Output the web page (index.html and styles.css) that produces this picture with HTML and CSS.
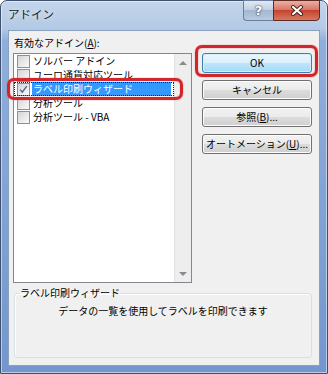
FILE: index.html
```html
<!DOCTYPE html>
<html lang="ja">
<head>
    <meta charset="UTF-8">
    <title>アドイン</title>
    <link rel="stylesheet" href="styles.css">
</head>
<body>
    <div class="window">
        <div class="titlebar">
            <span class="title">アドイン</span>
            <div class="caption">
                <span class="cap-help">?</span>
                <span class="cap-close">
                    <svg width="14" height="11" viewBox="0 0 14 11">
                        <path d="M3 2 L11 9 M11 2 L3 9" stroke="#40201c" stroke-width="4" stroke-linecap="round"/>
                        <path d="M3 2 L11 9 M11 2 L3 9" stroke="#fff" stroke-width="2.2" stroke-linecap="round"/>
                    </svg>
                </span>
            </div>
        </div>

        <div class="client">
            <div class="top">
                <div class="left">
                    <div class="list-label">有効なアドイン(<u>A</u>):</div>
                    <div class="listbox">
                        <ul class="items">
                            <li class="item"><span class="check"></span><span class="name">ソルバー アドイン</span></li>
                            <li class="item"><span class="check"></span><span class="name">ユーロ通貨対応ツール</span></li>
                            <li class="item selected">
                                <span class="check">
                                    <svg width="11" height="11" viewBox="0 0 11 11">
                                        <path d="M2.2 5.6 L4.3 8.2 L8.8 2.2" fill="none" stroke="#4c5f9c" stroke-width="1.4"/>
                                    </svg>
                                </span>
                                <span class="name">ラベル印刷ウィザード</span>
                            </li>
                            <li class="item"><span class="check"></span><span class="name">分析ツール</span></li>
                            <li class="item"><span class="check"></span><span class="name">分析ツール - VBA</span></li>
                        </ul>
                        <div class="scrollbar">
                            <span class="arrow up"></span>
                            <span class="arrow down"></span>
                        </div>
                    </div>
                </div>

                <div class="buttons">
                    <button class="btn default">OK</button>
                    <button class="btn">キャンセル</button>
                    <button class="btn">参照(<u>B</u>)...</button>
                    <button class="btn">オートメーション(<u>U</u>)...</button>
                </div>
            </div>

            <fieldset class="desc">
                <legend>ラベル印刷ウィザード</legend>
                <p>データの一覧を使用してラベルを印刷できます</p>
            </fieldset>

            <!-- red callouts drawn over the dialog -->
            <div class="mark mark-list"></div>
            <div class="mark mark-ok"></div>
        </div>
    </div>
</body>
</html>
```

FILE: styles.css
```css
body {
    margin: 0;
    background: #fff;
    font-family: "Noto Sans CJK JP", "Noto Sans", sans-serif;
    font-size: 10px;
    color: #000;
}

.window {
    width: 328px;
    height: 374px;
    box-sizing: border-box;
    border: 1px solid #3e506e;
    border-radius: 7px 7px 0 0;
    padding: 0 7px 7px;
    display: flex;
    flex-direction: column;
    background: linear-gradient(to bottom, #c3d5eb 0, #b3c9e5 28px, #8fafdb 40px, #7397cd 100%);
    box-shadow: inset 0 0 0 1px rgba(255, 255, 255, 0.5);
}

/* title bar */

.titlebar {
    height: 29px;
    display: flex;
    align-items: flex-start;
}

.title {
    margin-top: 5px;
    font-size: 11.5px;
    line-height: 16px;
    color: #1a1a1a;
    text-shadow: 0 0 5px rgba(255, 255, 255, 0.9);
}

.caption {
    margin-left: auto;
    margin-top: -1px;
    display: flex;
}

.cap-help,
.cap-close {
    height: 21px;
    box-sizing: border-box;
    display: flex;
    align-items: center;
    justify-content: center;
}

.cap-help {
    width: 30px;
    border: 1px solid #6a7f9e;
    border-right: 0;
    border-radius: 0 0 0 4px;
    background: linear-gradient(#e1e9f3, #c2d0e2 45%, #a5b7cf 50%, #b9cbe1);
    color: #fff;
    font-family: "DejaVu Sans", sans-serif;
    font-weight: bold;
    font-size: 13px;
    text-shadow: 0 0 2px #2a3a55, 0 0 1px #2a3a55;
}

.cap-close {
    width: 47px;
    border: 1px solid #5f2a26;
    border-radius: 0 0 4px 0;
    background: linear-gradient(#eab0a2, #d9786a 45%, #c6442f 50%, #d5785f);
}

/* client area */

.client {
    flex: 1;
    position: relative;
    box-sizing: border-box;
    border: 1px solid #8aa0bf;
    background: #f0f0f0;
    display: flex;
    flex-direction: column;
}

.top {
    display: flex;
    height: 252px;
}

.left {
    width: 183px;
    box-sizing: border-box;
    padding-left: 4px;
    display: flex;
    flex-direction: column;
}

.list-label {
    margin: 5px 0 0 1px;
    line-height: 14px;
}

.listbox {
    margin-top: 3px;
    width: 179px;
    height: 230px;
    box-sizing: border-box;
    border: 1px solid #828790;
    background: #fff;
    display: flex;
}

.items {
    list-style: none;
    margin: 0;
    padding: 0;
    flex: 1;
}

.item {
    display: flex;
    align-items: center;
    height: 14px;
    padding-left: 3px;
    line-height: 14px;
}

.check {
    width: 13px;
    height: 13px;
    flex: none;
    box-sizing: border-box;
    border: 1px solid #8e8f8f;
    background: linear-gradient(135deg, #d3d3d3, #fbfbfb);
    margin-right: 2px;
    display: flex;
    align-items: center;
    justify-content: center;
}

.name {
    flex: 1;
    margin-right: 3px;
    padding-left: 1px;
    white-space: nowrap;
}

.item.selected {
    outline: 1px dotted #222;
    outline-offset: -1px;
}

.item.selected .name {
    background: #3399ff;
    color: #fff;
}

.scrollbar {
    width: 17px;
    background: #eeeeee;
    box-shadow: inset 1px 0 #e2e2e2;
    display: flex;
    flex-direction: column;
    justify-content: space-between;
}

.arrow {
    height: 17px;
    display: flex;
    align-items: center;
    justify-content: center;
}

.arrow::before {
    content: "";
    border-left: 4px solid transparent;
    border-right: 4px solid transparent;
}

.arrow.up::before {
    border-bottom: 4px solid #8a8a8a;
}

.arrow.down::before {
    border-top: 4px solid #8a8a8a;
}

/* command buttons */

.buttons {
    margin: 22px 0 0 10px;
    width: 110px;
    display: flex;
    flex-direction: column;
    gap: 7px;
}

.btn {
    height: 20px;
    padding: 0;
    font: inherit;
    line-height: 16px;
    color: #000;
    border: 1px solid #707070;
    border-radius: 3px;
    background: linear-gradient(#f2f2f2, #ebebeb 50%, #dddddd 50%, #cfcfcf);
    box-shadow: inset 0 0 0 1px #fcfcfc;
}

.btn.default {
    border-color: #3c7fb1;
    background: linear-gradient(#eaf6fd, #d9f0fc 50%, #bee6fd 50%, #a7d9f5);
    box-shadow: inset 0 0 0 1px #d4eefc;
}

/* description group */

.desc {
    margin: 4px 0 0 5px;
    width: 298px;
    height: 71px;
    box-sizing: border-box;
    border: 1px solid #d5dfe5;
    border-radius: 3px;
    padding: 0 5px;
    box-shadow: inset 1px 1px #fff;
}

.desc legend {
    padding: 0;
    line-height: 12px;
}

.desc p {
    margin: 5px 0 0;
    line-height: 14px;
    text-align: center;
}

/* red highlight frames */

.mark {
    position: absolute;
    box-sizing: border-box;
    border: 3px solid #d3262c;
    border-radius: 7px;
    box-shadow: 0 0 1px #d3262c, inset 0 0 1px #d3262c;
}

.mark-list {
    left: -2px;
    top: 47px;
    width: 176px;
    height: 22px;
}

.mark-ok {
    left: 186px;
    top: 14px;
    width: 123px;
    height: 32px;
}
```
